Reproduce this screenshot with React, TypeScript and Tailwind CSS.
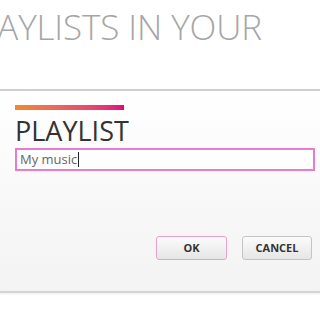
export default function App() {
  return (
    <div className="h-[320px] w-[320px] overflow-hidden bg-white font-['Open_Sans',sans-serif]">
      <div className="ml-[-41px] h-[89px] whitespace-nowrap pt-[5px] text-[35px] font-light leading-[43px] tracking-[-0.1px] text-[#a6a6a6]">
        PLAYLISTS IN YOUR
      </div>

      <div className="h-[204px] border-t-2 border-b-2 border-t-[#cfcfcf] border-b-[#d4d4d4] bg-gradient-to-b from-white to-[#f3f3f3] shadow-[0_1px_2px_rgba(0,0,0,0.08)]">
        <div className="pl-[15px] pr-[6px] pt-[14px]">
          <div className="h-[5px] w-[109px] bg-gradient-to-r from-[#f0892a] to-[#e0067e]" />
          <div className="mt-[4px] text-[27px] leading-[34px] text-[#333]">PLAYLIST</div>
          <div className="flex h-[23px] w-[300px] items-center border-2 border-[#e87ad0] bg-white pl-[3px] text-[13px] text-[#666]">
            My music
            <span className="ml-[1px] h-[15px] w-px bg-[#222]" />
          </div>
          <div className="mt-[65px] flex justify-end gap-[15px] pr-[2px]">
            <button
              type="button"
              className="h-[24px] w-[71px] rounded-[3px] border border-[#e9a0cf] bg-gradient-to-b from-[#fbfbfb] to-[#e6e6e6] text-[11px] font-bold text-[#333]"
            >
              OK
            </button>
            <button
              type="button"
              className="h-[24px] w-[70px] rounded-[3px] border border-[#c4c4c4] bg-gradient-to-b from-[#fbfbfb] to-[#e6e6e6] text-[11px] font-bold text-[#333]"
            >
              CANCEL
            </button>
          </div>
        </div>
      </div>
    </div>
  );
}
